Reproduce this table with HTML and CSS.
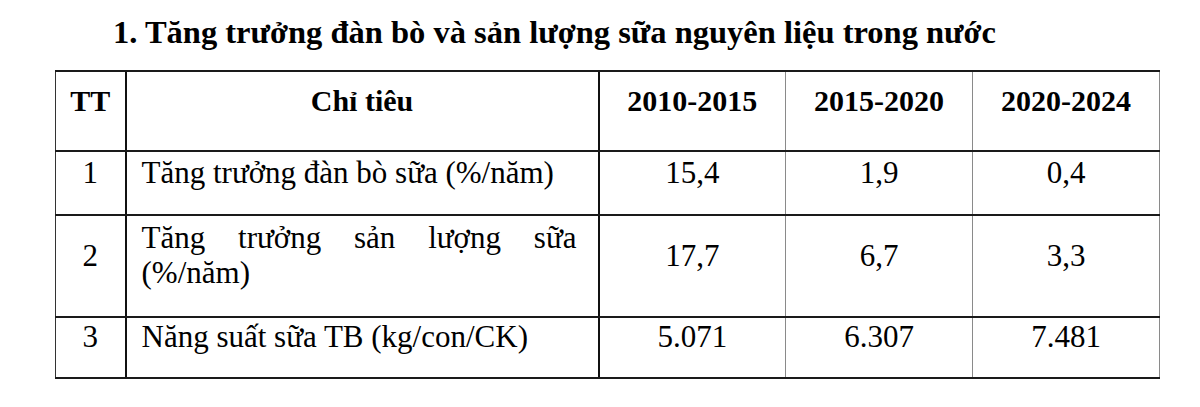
FILE: index.html
```html
<!DOCTYPE html>
<html lang="vi">

<head>
    <meta charset="UTF-8">
    <meta name="viewport" content="width=device-width, initial-scale=1.0">
    <title>Tăng trưởng đàn bò</title>
    <link rel="stylesheet" href="styles.css">
</head>

<body>
    <h2 class="title">1. Tăng trưởng đàn bò và sản lượng sữa nguyên liệu trong nước</h2>

    <table class="data">
        <colgroup>
            <col class="c-tt">
            <col class="c-name">
            <col class="c-year">
            <col class="c-year">
            <col class="c-year">
        </colgroup>
        <thead>
            <tr class="head">
                <th>TT</th>
                <th>Chỉ tiêu</th>
                <th>2010-2015</th>
                <th>2015-2020</th>
                <th>2020-2024</th>
            </tr>
        </thead>
        <tbody>
            <tr class="r1">
                <td>1</td>
                <td class="name">Tăng trưởng đàn bò sữa (%/năm)</td>
                <td>15,4</td>
                <td>1,9</td>
                <td>0,4</td>
            </tr>
            <tr class="r2">
                <td>2</td>
                <td class="name">Tăng trưởng sản lượng sữa (%/năm)</td>
                <td>17,7</td>
                <td>6,7</td>
                <td>3,3</td>
            </tr>
            <tr class="r3">
                <td>3</td>
                <td class="name">Năng suất sữa TB (kg/con/CK)</td>
                <td>5.071</td>
                <td>6.307</td>
                <td>7.481</td>
            </tr>
        </tbody>
    </table>
</body>

</html>
```

FILE: styles.css
```css
body {
    margin: 0;
    padding: 12px 0 0 55px;
    background: #fff;
    color: #000;
    font-family: "Liberation Serif", "Times New Roman", serif;
}

.title {
    margin: 0 0 18px 58px;
    font-size: 32.5px;
    font-weight: bold;
    line-height: 40px;
}

.data {
    border-collapse: collapse;
    table-layout: fixed;
    width: 1104px;
    font-size: 31px;
}

.c-tt { width: 70px; }
.c-name { width: 473px; }
.c-year { width: 187px; }

th,
td {
    padding: 0 10px 22px;
    text-align: center;
    vertical-align: middle;
    line-height: 35px;
    border-top: 2px solid #1a1a1a;
    border-bottom: 2px solid #1a1a1a;
    border-left: 1px solid #8a8a8a;
    border-right: 1px solid #8a8a8a;
}

th:first-child,
td:first-child {
    border-left: 1px solid #333;
}

th:nth-child(2),
td:nth-child(2),
th:nth-child(3),
td:nth-child(3) {
    border-left: 2px solid #111;
}

th {
    font-size: 30px;
    font-weight: bold;
}

td.name {
    text-align: justify;
    padding-left: 15px;
    padding-right: 21px;
}

.head th { height: 56px; }
.r1 td { height: 40px; }
.r2 td { height: 78px; }
.r3 td { height: 37px; }
```
